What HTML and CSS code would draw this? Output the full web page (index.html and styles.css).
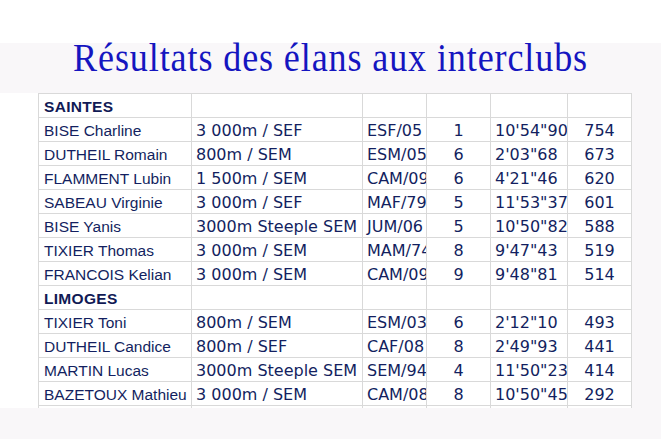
FILE: index.html
```html
<!DOCTYPE html>
<html lang="fr">
<head>
<meta charset="utf-8">
<title>Résultats des élans aux interclubs</title>
<link rel="stylesheet" href="styles.css">
</head>
<body>
<div class="topbar"></div>
<main class="page">
  <h1 class="title"><span class="title-text">Résultats des élans aux interclubs</span></h1>
  <div class="sheet">
    <table class="results">
      <colgroup>
        <col class="w-name"><col class="w-event"><col class="w-cat"><col class="w-place"><col class="w-time"><col class="w-pts">
      </colgroup>
      <tbody>
        <tr class="group"><td class="name">SAINTES</td><td></td><td></td><td></td><td></td><td></td></tr>
        <tr><td class="name">BISE Charline</td><td>3 000m / SEF</td><td>ESF/05</td><td class="c">1</td><td>10'54"90</td><td class="c">754</td></tr>
        <tr><td class="name">DUTHEIL Romain</td><td>800m / SEM</td><td>ESM/05</td><td class="c">6</td><td>2'03"68</td><td class="c">673</td></tr>
        <tr><td class="name">FLAMMENT Lubin</td><td>1 500m / SEM</td><td>CAM/09</td><td class="c">6</td><td>4'21"46</td><td class="c">620</td></tr>
        <tr><td class="name">SABEAU Virginie</td><td>3 000m / SEF</td><td>MAF/79</td><td class="c">5</td><td>11'53"37</td><td class="c">601</td></tr>
        <tr><td class="name">BISE Yanis</td><td>3000m Steeple SEM</td><td>JUM/06</td><td class="c">5</td><td>10'50"82</td><td class="c">588</td></tr>
        <tr><td class="name">TIXIER Thomas</td><td>3 000m / SEM</td><td>MAM/74</td><td class="c">8</td><td>9'47"43</td><td class="c">519</td></tr>
        <tr><td class="name">FRANCOIS Kelian</td><td>3 000m / SEM</td><td>CAM/09</td><td class="c">9</td><td>9'48"81</td><td class="c">514</td></tr>
        <tr class="group"><td class="name">LIMOGES</td><td></td><td></td><td></td><td></td><td></td></tr>
        <tr><td class="name">TIXIER Toni</td><td>800m / SEM</td><td>ESM/03</td><td class="c">6</td><td>2'12"10</td><td class="c">493</td></tr>
        <tr><td class="name">DUTHEIL Candice</td><td>800m / SEF</td><td>CAF/08</td><td class="c">8</td><td>2'49"93</td><td class="c">441</td></tr>
        <tr><td class="name">MARTIN Lucas</td><td>3000m Steeple SEM</td><td>SEM/94</td><td class="c">4</td><td>11'50"23</td><td class="c">414</td></tr>
        <tr><td class="name">BAZETOUX Mathieu</td><td>3 000m / SEM</td><td>CAM/08</td><td class="c">8</td><td>10'50"45</td><td class="c">292</td></tr>
        <tr><td class="name">&nbsp;</td><td></td><td></td><td></td><td></td><td></td></tr>
      </tbody>
    </table>
  </div>
</main>
</body>
</html>
```
FILE: styles.css
```css
html, body {
  margin: 0;
  padding: 0;
}
body {
  background: #f9f7f9;
  font-family: "DejaVu Sans", Verdana, sans-serif;
  color: #131f60;
}
.topbar {
  height: 43px;
  background: #ffffff;
}
.title {
  margin: 0 0 22px;
  font-family: "Liberation Serif", "Times New Roman", serif;
  font-weight: normal;
  font-size: 41px;
  line-height: 28px;
  text-align: center;
  color: #1515c0;
}
.title-text {
  display: inline-block;
  letter-spacing: 1px;
  transform: scaleX(0.88);
  transform-origin: center;
}
.sheet {
  width: 632px;
  height: 315px;
  overflow: hidden;
  background: #ffffff;
}
.results {
  margin-left: 38px;
  width: 594px;
  table-layout: fixed;
  border-collapse: collapse;
}
.w-name { width: 153px; }
.w-event { width: 171px; }
.w-cat { width: 64px; }
.w-place { width: 64px; }
.w-time { width: 77px; }
.w-pts { width: 64px; }
.results tr {
  height: 24px;
}
.results td {
  border: 1px solid #d9d9d9;
  padding: 0 2px 1px 4px;
  vertical-align: bottom;
  white-space: nowrap;
  overflow: hidden;
  font-size: 16px;
}
.results td.name {
  font-family: "Liberation Sans", Arial, sans-serif;
  font-size: 15.5px;
  padding-left: 5px;
}
.results td.c {
  text-align: center;
  padding-left: 2px;
}
.group td.name {
  font-weight: bold;
  letter-spacing: 0.3px;
  color: #111a55;
}
```
